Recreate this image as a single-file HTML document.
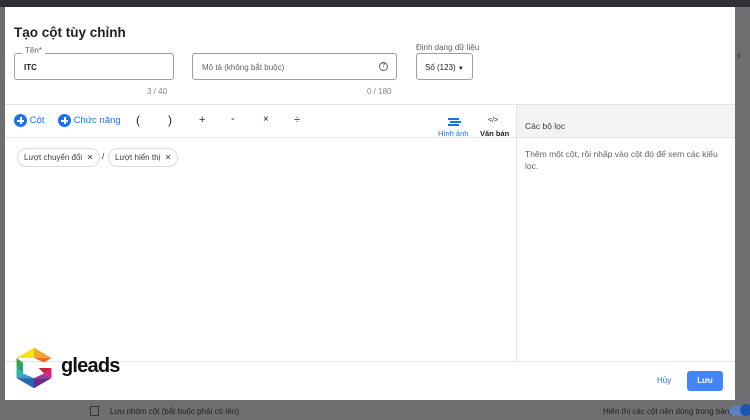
<!DOCTYPE html>
<html><head><meta charset="utf-8"><style>
*{box-sizing:border-box;margin:0;padding:0}
body{width:750px;height:420px;overflow:hidden;background:#6e6f71;font-family:"Liberation Sans",Arial,sans-serif;position:relative;color:#202124}
.top{position:absolute;left:0;top:0;width:750px;height:7px;background:#2e3033}
.modal{position:absolute;left:5px;top:7px;width:730px;height:393px;background:#fff}
.abs{position:absolute}
.title{left:9px;top:18px;font-size:13.5px;font-weight:bold;color:#202124}
.field{border:1px solid #9aa0a6;border-radius:3px;height:27px}
.lbl{font-size:8px;color:#5f6368}
.t8{font-size:8px}
.hr{height:1px;background:#e3e3e3}
.plus{display:inline-block;width:13px;height:13px;border-radius:50%;background:#1a73e8;position:relative;vertical-align:middle}
.plus:before{content:"";position:absolute;left:3px;top:5.5px;width:7px;height:2px;background:#fff}
.plus:after{content:"";position:absolute;left:5.5px;top:3px;width:2px;height:7px;background:#fff}
.chip{border:1px solid #dadce0;border-radius:10px;height:19px;font-size:8px;line-height:17px;padding:0 6px;color:#3c4043;white-space:nowrap}
.bg{background:#f1f3f4}
</style></head><body>
<div class="top"></div>
<div class="abs" style="left:737px;top:48px;color:#333;font-size:12px">‹</div>
<div class="modal">
 <div class="abs title">Tạo cột tùy chỉnh</div>
 <div class="abs field" style="left:9px;top:46px;width:160px"></div>
 <div class="abs lbl" style="left:17px;top:39px;background:#fff;padding:0 3px">Tên*</div>
 <div class="abs t8" style="left:19px;top:56px;font-weight:bold">ITC</div>
 <div class="abs t8" style="left:142px;top:80px;color:#80868b">3 / 40</div>
 <div class="abs field" style="left:187px;top:46px;width:205px"></div>
 <div class="abs t8" style="left:197px;top:56px;color:#5f6368">Mô tả (không bắt buộc)</div>
 <div class="abs" style="left:374px;top:55px;width:9px;height:9px;border:1px solid #5f6368;border-radius:50%;font-size:6px;line-height:7px;text-align:center;font-weight:bold;color:#5f6368">?</div>
 <div class="abs t8" style="left:362px;top:80px;color:#80868b">0 / 180</div>
 <div class="abs lbl" style="left:411px;top:36px">Định dạng dữ liệu</div>
 <div class="abs field" style="left:411px;top:46px;width:57px"></div>
 <div class="abs t8" style="left:420px;top:56px">Số (123) <span style="font-size:6px">▼</span></div>
 <div class="abs hr" style="left:0;top:97px;width:730px"></div>
 <div class="abs bg" style="left:511px;top:98px;width:219px;height:32px"></div>
 <div class="abs" style="left:511px;top:98px;width:1px;height:256px;background:#e3e3e3"></div>
 <div class="abs hr" style="left:0;top:130px;width:730px"></div>
 <div class="abs" style="left:9px;top:107px;font-size:9.5px;color:#1a73e8"><span class="plus"></span> Cột</div>
 <div class="abs" style="left:53px;top:107px;font-size:9.5px;color:#1a73e8"><span class="plus"></span> Chức năng</div>
 <div class="abs" style="left:131px;top:106px;font-size:12px">(</div>
 <div class="abs" style="left:163px;top:106px;font-size:12px">)</div>
 <div class="abs" style="left:194px;top:107px;font-size:11px">+</div>
 <div class="abs" style="left:226px;top:106px;font-size:11px">-</div>
 <div class="abs" style="left:258px;top:107px;font-size:10px">×</div>
 <div class="abs" style="left:289px;top:107px;font-size:11px">÷</div>
 <div class="abs" style="left:443px;top:111px;width:11px;height:2px;background:#1a73e8;box-shadow:2px 3px 0 #1a73e8,0 6px 0 #1a73e8"></div>
 <div class="abs" style="left:433px;top:122px;font-size:7.5px;color:#1a73e8">Hình ảnh</div>
 <div class="abs" style="left:483px;top:110px;font-size:7px">&lt;/&gt;</div>
 <div class="abs" style="left:475px;top:122px;font-size:7.5px;font-weight:bold">Văn bản</div>
 <div class="abs" style="left:520px;top:114px;font-size:8.5px;color:#3c4043">Các bộ lọc</div>
 <div class="abs" style="left:520px;top:141px;width:200px;font-size:8.5px;line-height:12px;color:#5f6368">Thêm một cột, rồi nhấp vào cột đó để xem các kiểu lọc.</div>
 <div class="abs chip" style="left:12px;top:141px">Lượt chuyển đổi &nbsp;✕</div>
 <div class="abs" style="left:97px;top:145px;font-size:8px">/</div>
 <div class="abs chip" style="left:103px;top:141px">Lượt hiển thị &nbsp;✕</div>
 <div class="abs hr" style="left:0;top:354px;width:730px"></div>
 <div class="abs" style="left:652px;top:369px;font-size:8px;color:#1a73e8">Hủy</div>
 <div class="abs" style="left:682px;top:364px;width:36px;height:20px;background:#4285f4;border-radius:3px;color:#fff;font-size:8px;font-weight:bold;text-align:center;line-height:20px">Lưu</div>
 <svg class="abs" style="left:6px;top:338px" width="46" height="46" viewBox="0 0 50 50">
  <polygon points="25,3 44,14 25,14" fill="#f4a32c"/><polygon points="25,3 6,14 25,14" fill="#f7e219"/>
  <polygon points="44,14 36,19 25,14" fill="#ef6b24"/>
  <polygon points="6,14 13,19 6,25" fill="#3aa64c"/><polygon points="6,25 13,19 13,31" fill="#1fa670"/>
  <polygon points="6,25 13,31 6,36" fill="#2bb3a3"/><polygon points="6,36 13,31 25,36" fill="#3d9ad6"/>
  <polygon points="6,36 25,47 25,36" fill="#2567b0"/><polygon points="25,47 44,36 25,36" fill="#6a2a8e"/>
  <polygon points="44,36 25,36 36,31" fill="#a23398"/><polygon points="44,25 44,36 36,31" fill="#e0207a"/>
  <polygon points="30,25 44,25 36,31" fill="#c8223d"/>
 </svg>
 <div class="abs" style="left:56px;top:348px;font-size:20px;font-weight:bold;color:#111;letter-spacing:-0.8px">gleads</div>
</div>
<div class="abs" style="left:90px;top:406px;width:9px;height:10px;border:1px solid #333;border-radius:1px"></div>
<div class="abs" style="left:110px;top:407px;font-size:8px;color:#222">Lưu nhóm cột (bắt buộc phải có tên)</div>
<div class="abs" style="left:603px;top:407px;font-size:8px;color:#222">Hiển thị các cột nên dùng trong bảng</div>
<div class="abs" style="left:729px;top:406px;width:21px;height:10px;border-radius:5px;background:#5b7fbf"></div>
<div class="abs" style="left:740px;top:404px;width:12px;height:12px;border-radius:6px;background:#1a56b0"></div>
</body></html>
